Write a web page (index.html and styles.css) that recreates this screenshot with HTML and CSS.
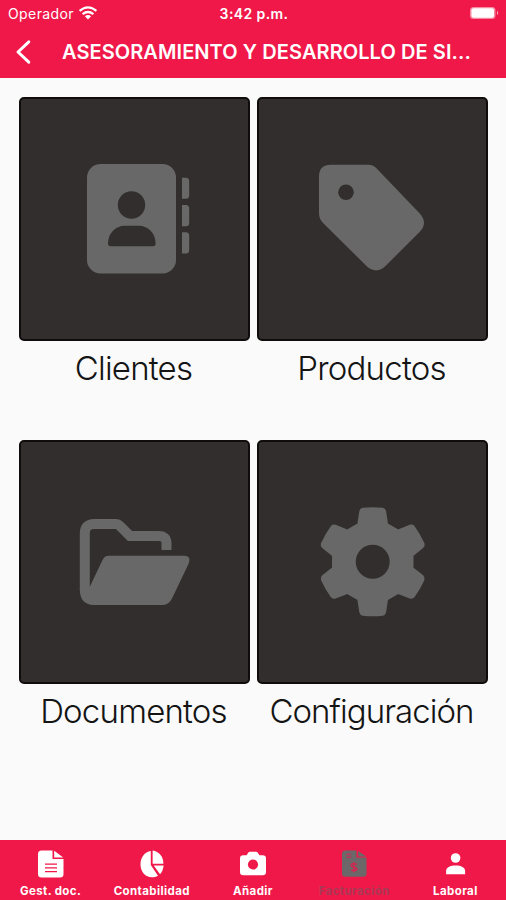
FILE: index.html
```
<!DOCTYPE html>
<html lang="es">
<head>
    <meta charset="UTF-8">
    <title>Facturación</title>
    <link rel="stylesheet" href="styles.css">
</head>
<body>
    <header class="header">
        <div class="status">
            <div class="carrier">
                <span>Operador</span>
                <svg class="wifi" width="20" height="14" viewBox="0 0 20 14">
                    <path d="M1.6 4.9Q10 -2.1 18.4 4.9" fill="none" stroke="#fff" stroke-width="2.3"/>
                    <path d="M4.6 8.2Q10 3.8 15.4 8.2" fill="none" stroke="#fff" stroke-width="2.2"/>
                    <path d="M6.9 10.2Q10 7.7 13.1 10.2L10 13.4Z" fill="#fff"/>
                </svg>
            </div>
            <span class="time">3:42 p.m.</span>
            <svg class="battery" width="31" height="14" viewBox="0 0 31 14">
                <rect x="1" y="1" width="25.5" height="12" rx="3.5" fill="#f78ba3"/>
                <rect x="2.5" y="2.2" width="22.5" height="9.6" rx="2" fill="#fff"/>
                <path d="M28 4.8Q30.4 7 28 9.2Z" fill="#f9a5b7"/>
            </svg>
        </div>
        <div class="navbar">
            <svg class="back" width="16" height="26" viewBox="0 0 16 26">
                <path d="M13.8 2.8L3 13L13.8 23.2" fill="none" stroke="#fff" stroke-width="3" stroke-linecap="round" stroke-linejoin="round"/>
            </svg>
            <h1 class="title">ASESORAMIENTO Y DESARROLLO DE SI...</h1>
        </div>
    </header>

    <main class="grid">
        <div class="item">
            <div class="tile">
                <svg width="120" height="120" viewBox="0 0 120 120">
                    <rect x="12" y="5" width="89" height="109.5" rx="13.5"/>
                    <path d="M107 18.7H111Q114.2 18.7 114.2 22.2V36.3Q114.2 39.8 111 39.8H107Z"/>
                    <path d="M107 46H111Q114.2 46 114.2 49.5V63.7Q114.2 67.2 111 67.2H107Z"/>
                    <path d="M107 73.2H111Q114.2 73.2 114.2 76.7V91Q114.2 94.5 111 94.5H107Z"/>
                    <circle class="hole" cx="56.5" cy="46" r="13.7"/>
                    <path class="hole" d="M50 66.7H63.5C73.5 66.7 80.6 74.5 80.6 84.5Q80.6 87.3 78 87.3H35.7Q33 87.3 33 84.5C33 74.5 40.2 66.7 50 66.7Z"/>
                </svg>
            </div>
            <p class="name">Clientes</p>
        </div>
        <div class="item">
            <div class="tile">
                <svg width="120" height="120" viewBox="0 0 120 120">
                    <path d="M6 17.5Q6 5.8 17.7 5.8H55.5Q60 5.8 63.2 9L106.3 54Q115.7 63.8 106.3 73.3L73 106.5Q63.5 116 53.5 107L10.3 64.2Q6 60 6 54Z"/>
                    <circle class="hole" cx="33" cy="33.2" r="7.8"/>
                </svg>
            </div>
            <p class="name">Productos</p>
        </div>
        <div class="item">
            <div class="tile">
                <svg width="120" height="120" viewBox="0 0 120 120">
                    <path class="line" d="M9.8 88V31.5Q9.8 22 19.3 22H40.5Q43 22 45 24L55 34H84Q91.5 34 91.5 41.5V48"/>
                    <path d="M33.5 53.7H110Q116.5 54.5 113.7 61.5L97 96.5Q93.8 103 88 103H18.5Q4.8 102.5 4.8 87L14.8 84.7L27.5 58Q29.5 53.7 33.5 53.7Z"/>
                </svg>
            </div>
            <p class="name">Documentos</p>
        </div>
        <div class="item">
            <div class="tile">
                <svg width="120" height="120" viewBox="-59.7 -59.7 120 120">
                    <defs>
                        <path id="tooth" d="M-15.3 -38L-13.4 -50.5Q-12.7 -53.5 -10 -54Q0 -55 10 -54Q12.7 -53.5 13.4 -50.5L15.3 -38L25.3 -32.3L0 0L-25.3 -32.3Z"/>
                    </defs>
                    <use href="#tooth"/>
                    <use href="#tooth" transform="rotate(60)"/>
                    <use href="#tooth" transform="rotate(120)"/>
                    <use href="#tooth" transform="rotate(180)"/>
                    <use href="#tooth" transform="rotate(240)"/>
                    <use href="#tooth" transform="rotate(300)"/>
                    <circle class="hole" r="17"/>
                </svg>
            </div>
            <p class="name long">Configuración</p>
        </div>
    </main>

    <nav class="tabs">
        <div class="tab">
            <svg width="28" height="28" viewBox="0 0 28 28">
                <path d="M4.5 .5H15.5V9H26.5V24Q26.5 27.5 23 27.5H4.5Q1 27.5 1 24V4Q1 .5 4.5 .5Z"/>
                <path d="M17.2 .8L26.2 7.6H17.2Z"/>
                <path d="M8 14.2H20M8 17.9H20M8 21.6H20" stroke="#f01849" stroke-width="1.3"/>
            </svg>
            <span>Gest. doc.</span>
        </div>
        <div class="tab">
            <svg width="28" height="28" viewBox="0 0 28 28">
                <path d="M12.8 1V15L20 25.7C11 30.5 2.5 24 2.5 14.5C2.5 7.5 6.5 2 12.8 1Z"/>
                <path d="M14.6 .5C21 1.3 25.4 6.5 25.4 13.7H14.6Z"/>
                <path d="M15.7 15.6H25.6C25.3 19.2 24 22.2 22 24.3Z"/>
            </svg>
            <span>Contabilidad</span>
        </div>
        <div class="tab">
            <svg width="28" height="28" viewBox="0 0 28 28">
                <path d="M4.3 5.3H7.5L9.2 2.7Q9.8 1.7 11 1.7H17Q18.2 1.7 18.8 2.7L20.5 5.3H23.7Q27 5.3 27 8.5V22Q27 25.3 23.7 25.3H4.3Q1 25.3 1 22V8.5Q1 5.3 4.3 5.3Z"/>
                <circle cx="14" cy="14.5" r="5.1" fill="#f01849"/>
            </svg>
            <span>Añadir</span>
        </div>
        <div class="tab active">
            <svg width="28" height="28" viewBox="0 0 28 28">
                <path d="M5.5 .5H16.5V7.5H26.5V23.5Q26.5 26.8 23 26.8H5.5Q2 26.8 2 23.5V4Q2 .5 5.5 .5Z"/>
                <path d="M18.2 .9L26.2 6.6H18.2Z"/>
                <path d="M6.5 4.4H11.2M6.5 7.2H11.2" stroke="#b5375a" stroke-width="1.6"/>
                <path d="M17 14.3Q11 12.7 11.2 15.5C11.3 18 17 16.5 16.9 19.3Q16.5 21.5 11 20M14 12.2V22.3" fill="none" stroke="#d42650" stroke-width="1.5"/>
            </svg>
            <span>Facturación</span>
        </div>
        <div class="tab">
            <svg width="28" height="28" viewBox="0 0 28 28">
                <circle cx="14.6" cy="8" r="4.8"/>
                <path d="M5.1 24.3V21C5.1 17.2 9.1 15.4 14.6 15.4S24.1 17.2 24.1 21V24.3Z"/>
            </svg>
            <span>Laboral</span>
        </div>
    </nav>
</body>
</html>
```
FILE: styles.css
```
* {
    box-sizing: border-box;
}
body {
    font-family: Inter, 'Liberation Sans', sans-serif;
    display: flex;
    flex-direction: column;
    height: 900px;
    margin: 0;
    background-color: #fafafa;
    color: #141414;
}
svg {
    display: block;
    flex: none;
}
.header {
    height: 78px;
    background-color: #f01849;
    color: #fff;
}
.status {
    display: grid;
    grid-template-columns: 1fr auto 1fr;
    align-items: center;
    height: 26px;
    padding: 0 6px 0 8px;
    font-size: 14px;
}
.carrier {
    display: flex;
    align-items: center;
    gap: 4px;
    letter-spacing: 0.4px;
}
.time {
    font-weight: 600;
    letter-spacing: 0.4px;
}
.battery {
    justify-self: end;
}
.navbar {
    display: flex;
    align-items: center;
    height: 52px;
    padding-left: 15px;
}
.title {
    margin: 0 0 0 31px;
    font-size: 20px;
    font-weight: 600;
    letter-spacing: 0.08px;
    white-space: nowrap;
}
.grid {
    flex: 1;
    display: grid;
    grid-template-columns: 231px 231px;
    grid-auto-rows: 343px;
    column-gap: 7px;
    padding: 19px 0 0 19px;
}
.tile {
    display: flex;
    justify-content: center;
    align-items: center;
    height: 244px;
    background-color: #322e2d;
    border: 2px solid #100c0c;
    border-radius: 5px;
}
.tile svg {
    fill: #686868;
}
.tile .hole {
    fill: #322e2d;
}
.tile .line {
    fill: none;
    stroke: #686868;
    stroke-width: 10;
}
.name {
    margin: 7px 2px 0 0;
    font-size: 33px;
    font-weight: 350;
    line-height: 40px;
    letter-spacing: -0.8px;
    text-align: center;
    white-space: nowrap;
}
.name.long {
    letter-spacing: -0.95px;
}
.tabs {
    display: grid;
    grid-template-columns: repeat(5, 1fr);
    height: 60px;
    padding-top: 10px;
    background-color: #f01849;
    color: #fff;
}
.tab {
    display: flex;
    flex-direction: column;
    align-items: center;
    font-size: 11.5px;
    font-weight: 700;
    line-height: 14px;
    letter-spacing: 0.4px;
}
.tab svg {
    fill: currentColor;
    margin-bottom: 6px;
}
.tab.active svg {
    fill: #6c6769;
}
.tab.active span {
    color: #a83a55;
}
```
